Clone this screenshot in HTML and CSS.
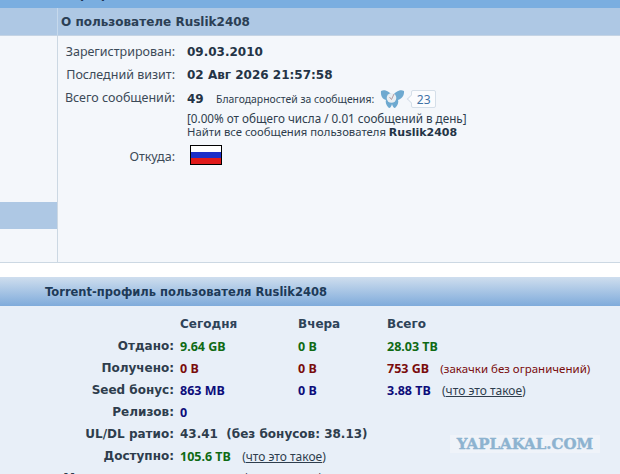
FILE: index.html
```html
<!DOCTYPE html>
<html lang="en">
<head>
  <meta charset="UTF-8" />
  <title>Профиль Ruslik2408</title>
  <link rel="stylesheet" href="styles.css">
</head>
<body>

<div class="top-strip"><div class="top-title">Профиль</div></div>

<div class="about-head">
  <div class="side-cell"></div>
  <div class="about-title">О пользователе Ruslik2408</div>
</div>

<div class="about">
  <div class="side">
    <div class="side-active"></div>
  </div>
  <div class="about-main">
    <div class="info-row info-single">
      <div class="info-label">Зарегистрирован:</div>
      <div class="info-value"><b>09.03.2010</b></div>
    </div>
    <div class="info-row info-single">
      <div class="info-label">Последний визит:</div>
      <div class="info-value"><b>02 Авг 2026 21:57:58</b></div>
    </div>
    <div class="info-row">
      <div class="info-label">Всего сообщений:</div>
      <div class="info-value">
        <div class="posts-line">
          <b class="posts-num">49</b>
          <span class="thanks">Благодарностей за сообщения:</span>
          <svg class="butterfly" width="25" height="18" viewBox="0 0 25 18">
            <path d="M1 1 C5 -1 10 2 12.5 6 C15 2 20 -1 24 1 C24.500 5 22 9 18 10 C19 13 17 16 15 18 C13.500 18 12.500 16 12 14 C11.500 16 10.500 18 9 18 C7 16 5 13 6 10 C2 9 0.500 5 1 1 Z" fill="#6ea9d0"/>
            <circle cx="11.500" cy="8" r="4.800" fill="#e9eef2"/>
            <path d="M9.500 7 L11.500 9.500 L14 4" fill="none" stroke="#b39ca2" stroke-width="1"/>
          </svg>
          <span class="count">23</span>
        </div>
        <div class="posts-stat">[0.00% от общего числа / 0.01 сообщений в день]</div>
        <div class="posts-stat posts-find">Найти все сообщения пользователя <b class="user-link">Ruslik2408</b></div>
      </div>
    </div>
    <div class="info-row info-from">
      <div class="info-label">Откуда:</div>
      <div class="flag"><i class="flag-w"></i><i class="flag-b"></i><i class="flag-r"></i></div>
    </div>
  </div>
</div>

<div class="torrent-head">Torrent-профиль пользователя Ruslik2408</div>

<div class="torrent">
  <table class="stats">
    <tr class="stats-head"><td></td><td>Сегодня</td><td>Вчера</td><td>Всего</td></tr>
    <tr>
      <th>Отдано:</th><td class="green">9.64 GB</td><td class="green">0 B</td><td class="green">28.03 TB</td>
    </tr>
    <tr>
      <th>Получено:</th><td class="red">0 B</td><td class="red">0 B</td>
      <td class="red">753 GB <span class="note note-red">(закачки без ограничений)</span></td>
    </tr>
    <tr>
      <th>Seed бонус:</th><td class="navy">863 MB</td><td class="navy">0 B</td>
      <td class="navy">3.88 TB <span class="note">(<u>что это такое</u>)</span></td>
    </tr>
    <tr><th>Релизов:</th><td class="navy" colspan="3">0</td></tr>
    <tr><th>UL/DL ратио:</th><td class="slate" colspan="3">43.41 &nbsp;(без бонусов: 38.13)</td></tr>
    <tr>
      <th>Доступно:</th>
      <td class="green" colspan="3">105.6 TB <span class="note">(<u>что это такое</u>)</span></td>
    </tr>
    <tr>
      <th>Макс. скорость:</th>
      <td colspan="3" class="green">7.68 MB/s <span class="sep">|</span> <span class="red">0.71 MB/s</span> <span class="sep">|</span></td>
    </tr>
  </table>
  <div class="watermark">YAPLAKAL.COM</div>
</div>

</body>
</html>
```

FILE: styles.css
```css
html, body {
  margin: 0;
  height: 474px;
  overflow: hidden;
}
body {
  font-family: 'Noto Sans', 'DejaVu Sans', sans-serif;
  font-size: 12px;
  background: #fff;
  color: #2e3d4d;
}
b {
  font-family: 'DejaVu Sans', sans-serif;
  font-size: 12px;
  color: #243446;
}

.top-strip {
  height: 8px;
  overflow: hidden;
  background: #7aaee0;
  padding-left: 70px;
}
.top-title {
  margin-top: -12px;
  line-height: 12px;
  font-family: 'DejaVu Sans', sans-serif;
  font-weight: bold;
  color: #1d3652;
}

.about-head {
  display: flex;
  height: 28px;
  background: #aec8e4;
  border-bottom: 1px solid #c5d4e4;
  box-sizing: border-box;
}
.side-cell {
  width: 57px;
  border-right: 1px solid #c6d9ec;
}
.about-title {
  padding-left: 3px;
  line-height: 29px;
  font-family: 'DejaVu Sans', sans-serif;
  font-weight: bold;
  color: #2b3f55;
}

.about {
  display: flex;
  height: 226px;
  background: #f4f7fb;
  border-bottom: 1px solid #ccd8e3;
}
.side {
  width: 57px;
  padding-top: 166px;
  border-right: 1px solid #ccd8e3;
}
.side-active {
  height: 27px;
  background: #aec8e4;
}
.about-main {
  padding-top: 4px;
}
.info-row {
  display: flex;
  line-height: 23px;
}
.info-single {
  height: 23px;
}
.info-label {
  width: 117px;
  height: 23px;
  text-align: right;
  font-size: 12.5px;
  color: #3c4a58;
}
.info-value {
  padding-left: 12px;
}
.posts-line {
  display: flex;
  align-items: center;
  height: 24px;
  margin-top: 1px;
}
.posts-num {
  width: 29px;
}
.thanks {
  font-size: 10.4px;
}
.butterfly {
  margin-left: 6px;
}
.count {
  position: relative;
  box-sizing: border-box;
  width: 25px;
  height: 18px;
  margin-left: 6px;
  line-height: 17px;
  text-align: center;
  border: 1px solid #d5dfe9;
  border-radius: 2px;
  background: #fbfcfe;
  color: #3f72a6;
}
.count::before {
  content: "";
  position: absolute;
  left: -4px;
  top: 5px;
  width: 5px;
  height: 5px;
  background: #fbfcfe;
  border-left: 1px solid #d5dfe9;
  border-bottom: 1px solid #d5dfe9;
  transform: rotate(45deg);
}
.posts-stat {
  height: 14px;
  line-height: 14px;
  font-size: 11.7px;
  white-space: nowrap;
}
.posts-find {
  font-size: 11.3px;
}
.user-link {
  font-size: 11px;
}
.info-from {
  margin-top: 6px;
  align-items: flex-start;
}
.flag {
  margin-left: 15px;
  width: 30px;
  border: 1px solid #000;
}
.flag i {
  display: block;
  height: 6px;
}
.flag-w { background: #fff; }
.flag-b { background: #1c2fc8; }
.flag-r { background: #e01a1a; }

.torrent-head {
  height: 29px;
  margin-top: 14px;
  padding-left: 45px;
  line-height: 30px;
  font-family: 'DejaVu Sans', sans-serif;
  font-weight: bold;
  font-size: 11.5px;
  color: #1d3a58;
  background: linear-gradient(#cfdeee, #7fabdb);
  box-sizing: border-box;
}
.torrent {
  position: relative;
  height: 168px;
  background: #e8eff8;
}
.stats {
  border-collapse: collapse;
  font-family: 'DejaVu Sans', sans-serif;
  font-size: 12px;
  font-weight: bold;
  color: #2e3d4d;
}
.stats th, .stats td {
  padding: 0;
  height: 22px;
  text-align: left;
  white-space: nowrap;
}
.stats th {
  width: 174px;
  padding-right: 6px;
  text-align: right;
}
.stats td:nth-child(2) { width: 118px; }
.stats td:nth-child(3) { width: 89px; }
.stats-head td {
  color: #2e4358;
  padding-top: 7px;
}
.stats .green, .stats .red, .stats .navy {
  font-family: 'Noto Sans', sans-serif;
  font-size: 12.5px;
}
.stats .green { color: #0f6a14; }
.stats .red { color: #7a0c0c; }
.stats .navy { color: #0c0c7a; }
.stats .slate { color: #2e3d4d; }
.stats .sep { color: #2e3d4d; font-weight: normal; }
.stats .note {
  margin-left: 8px;
  font-family: 'Noto Sans', sans-serif;
  font-size: 12px;
  font-weight: normal;
  color: #2e3d4d;
}
.stats .note-red {
  font-size: 11.5px;
  color: #7a0c0c;
}

.watermark {
  position: absolute;
  left: 450px;
  top: 129px;
  width: 150px;
  height: 18px;
  line-height: 18px;
  text-align: center;
  background: #eff3f9;
  color: #8db3d0;
  font-family: 'DejaVu Serif', serif;
  font-weight: bold;
  font-size: 15px;
  -webkit-text-stroke: 0.4px #8db3d0;
}
```
